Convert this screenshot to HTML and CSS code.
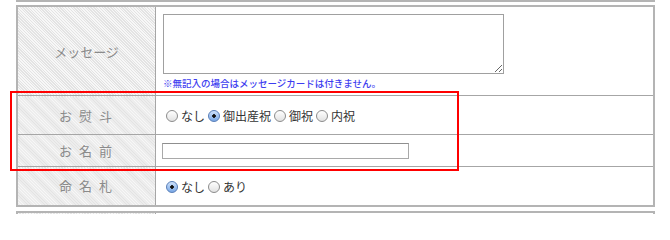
FILE: index.html
```html
<!DOCTYPE html>
<html lang="ja">
<head>
<meta charset="utf-8">
<link rel="stylesheet" href="styles.css">
</head>
<body>
<div class="page">
  <table class="form form-prev">
    <tr><th class="label"></th><td class="field"></td></tr>
  </table>

  <table class="form form-main">
    <tr class="row-message">
      <th class="label">メッセージ</th>
      <td class="field">
        <textarea class="msg"></textarea>
        <p class="note">※無記入の場合はメッセージカードは付きません。</p>
      </td>
    </tr>
    <tr class="row-noshi">
      <th class="label spaced">お 熨 斗</th>
      <td class="field">
        <div class="options">
          <label class="opt"><input type="radio" name="noshi">なし</label>
          <label class="opt"><input type="radio" name="noshi" checked>御出産祝</label>
          <label class="opt"><input type="radio" name="noshi">御祝</label>
          <label class="opt"><input type="radio" name="noshi">内祝</label>
        </div>
      </td>
    </tr>
    <tr class="row-name">
      <th class="label spaced">お 名 前</th>
      <td class="field"><input type="text" class="name"></td>
    </tr>
    <tr class="row-meimei">
      <th class="label spaced">命 名 札</th>
      <td class="field">
        <div class="options">
          <label class="opt"><input type="radio" name="fuda" checked>なし</label>
          <label class="opt"><input type="radio" name="fuda">あり</label>
        </div>
      </td>
    </tr>
  </table>

  <table class="form form-next">
    <tr><th class="label"></th><td class="field"></td></tr>
  </table>

  <div class="highlight"></div>
</div>
</body>
</html>
```

FILE: styles.css
```css
html, body {
  margin: 0;
  padding: 0;
  background: #fff;
}

.page {
  position: relative;
  width: 670px;
  height: 214px;
  overflow: hidden;
  font-family: "Noto Sans CJK JP", "Noto Sans", sans-serif;
}

.form {
  border-collapse: collapse;
  width: 639px;
  margin-left: 16px;
  border: 2px solid #b4b4b4;
}

.form th, .form td {
  border: 1px solid #a6a6a6;
  padding: 0;
}

.form .label {
  width: 137px;
  font-weight: normal;
  font-size: 13px;
  color: #8a8a8a;
  text-align: center;
  background-color: #efefef;
  background-image: repeating-linear-gradient(45deg, #f7f7f7 0 1px, #e3e3e3 1px 2px);
}

.form .spaced {
  letter-spacing: 2px;
}

.form .field {
  padding: 0 7px;
  font-size: 12px;
  color: #333;
  vertical-align: middle;
}

.form-prev {
  margin-top: -30px;
  height: 32px;
}

.form-main {
  margin-top: 3px;
}

.form-next {
  margin-top: 4px;
  height: 30px;
}

.row-message { height: 89px; }
.row-noshi { height: 39px; }
.row-name { height: 32px; }
.row-meimei { height: 39px; }

.form .row-message .field {
  padding-top: 7px;
  padding-bottom: 6px;
  vertical-align: top;
}

.msg {
  display: block;
  width: 341px;
  height: 60px;
  box-sizing: border-box;
  margin: 0;
  border: 1px solid #a0a0a0;
  resize: both;
}

.note {
  margin: 3px 0 0;
  font-size: 9.5px;
  font-weight: 500;
  line-height: 12px;
  color: #3d3df0;
}

.options {
  display: flex;
  align-items: center;
  padding-top: 2px;
}

.opt {
  display: inline-flex;
  align-items: center;
  line-height: 14px;
}

.opt input {
  appearance: none;
  -webkit-appearance: none;
  width: 12px;
  height: 12px;
  margin: 0 3px;
  border: 1px solid #8c8c8c;
  border-radius: 50%;
  background: linear-gradient(#ffffff, #e2e2e2);
  box-sizing: border-box;
}

.opt input:checked {
  border-color: #5a7fb8;
  background: radial-gradient(circle, #111 0 1.5px, transparent 2.1px),
              linear-gradient(#cfe2fb, #7aa8e6);
}

.name {
  display: block;
  width: 247px;
  height: 16px;
  box-sizing: border-box;
  margin: 0 0 0 -1px;
  border: 1px solid #a9a9a9;
  border-top-color: #8f8f8f;
  padding: 0 2px;
}

.highlight {
  position: absolute;
  left: 10px;
  top: 91px;
  width: 445px;
  height: 76px;
  border: 2px solid #ff0000;
  pointer-events: none;
}
```
